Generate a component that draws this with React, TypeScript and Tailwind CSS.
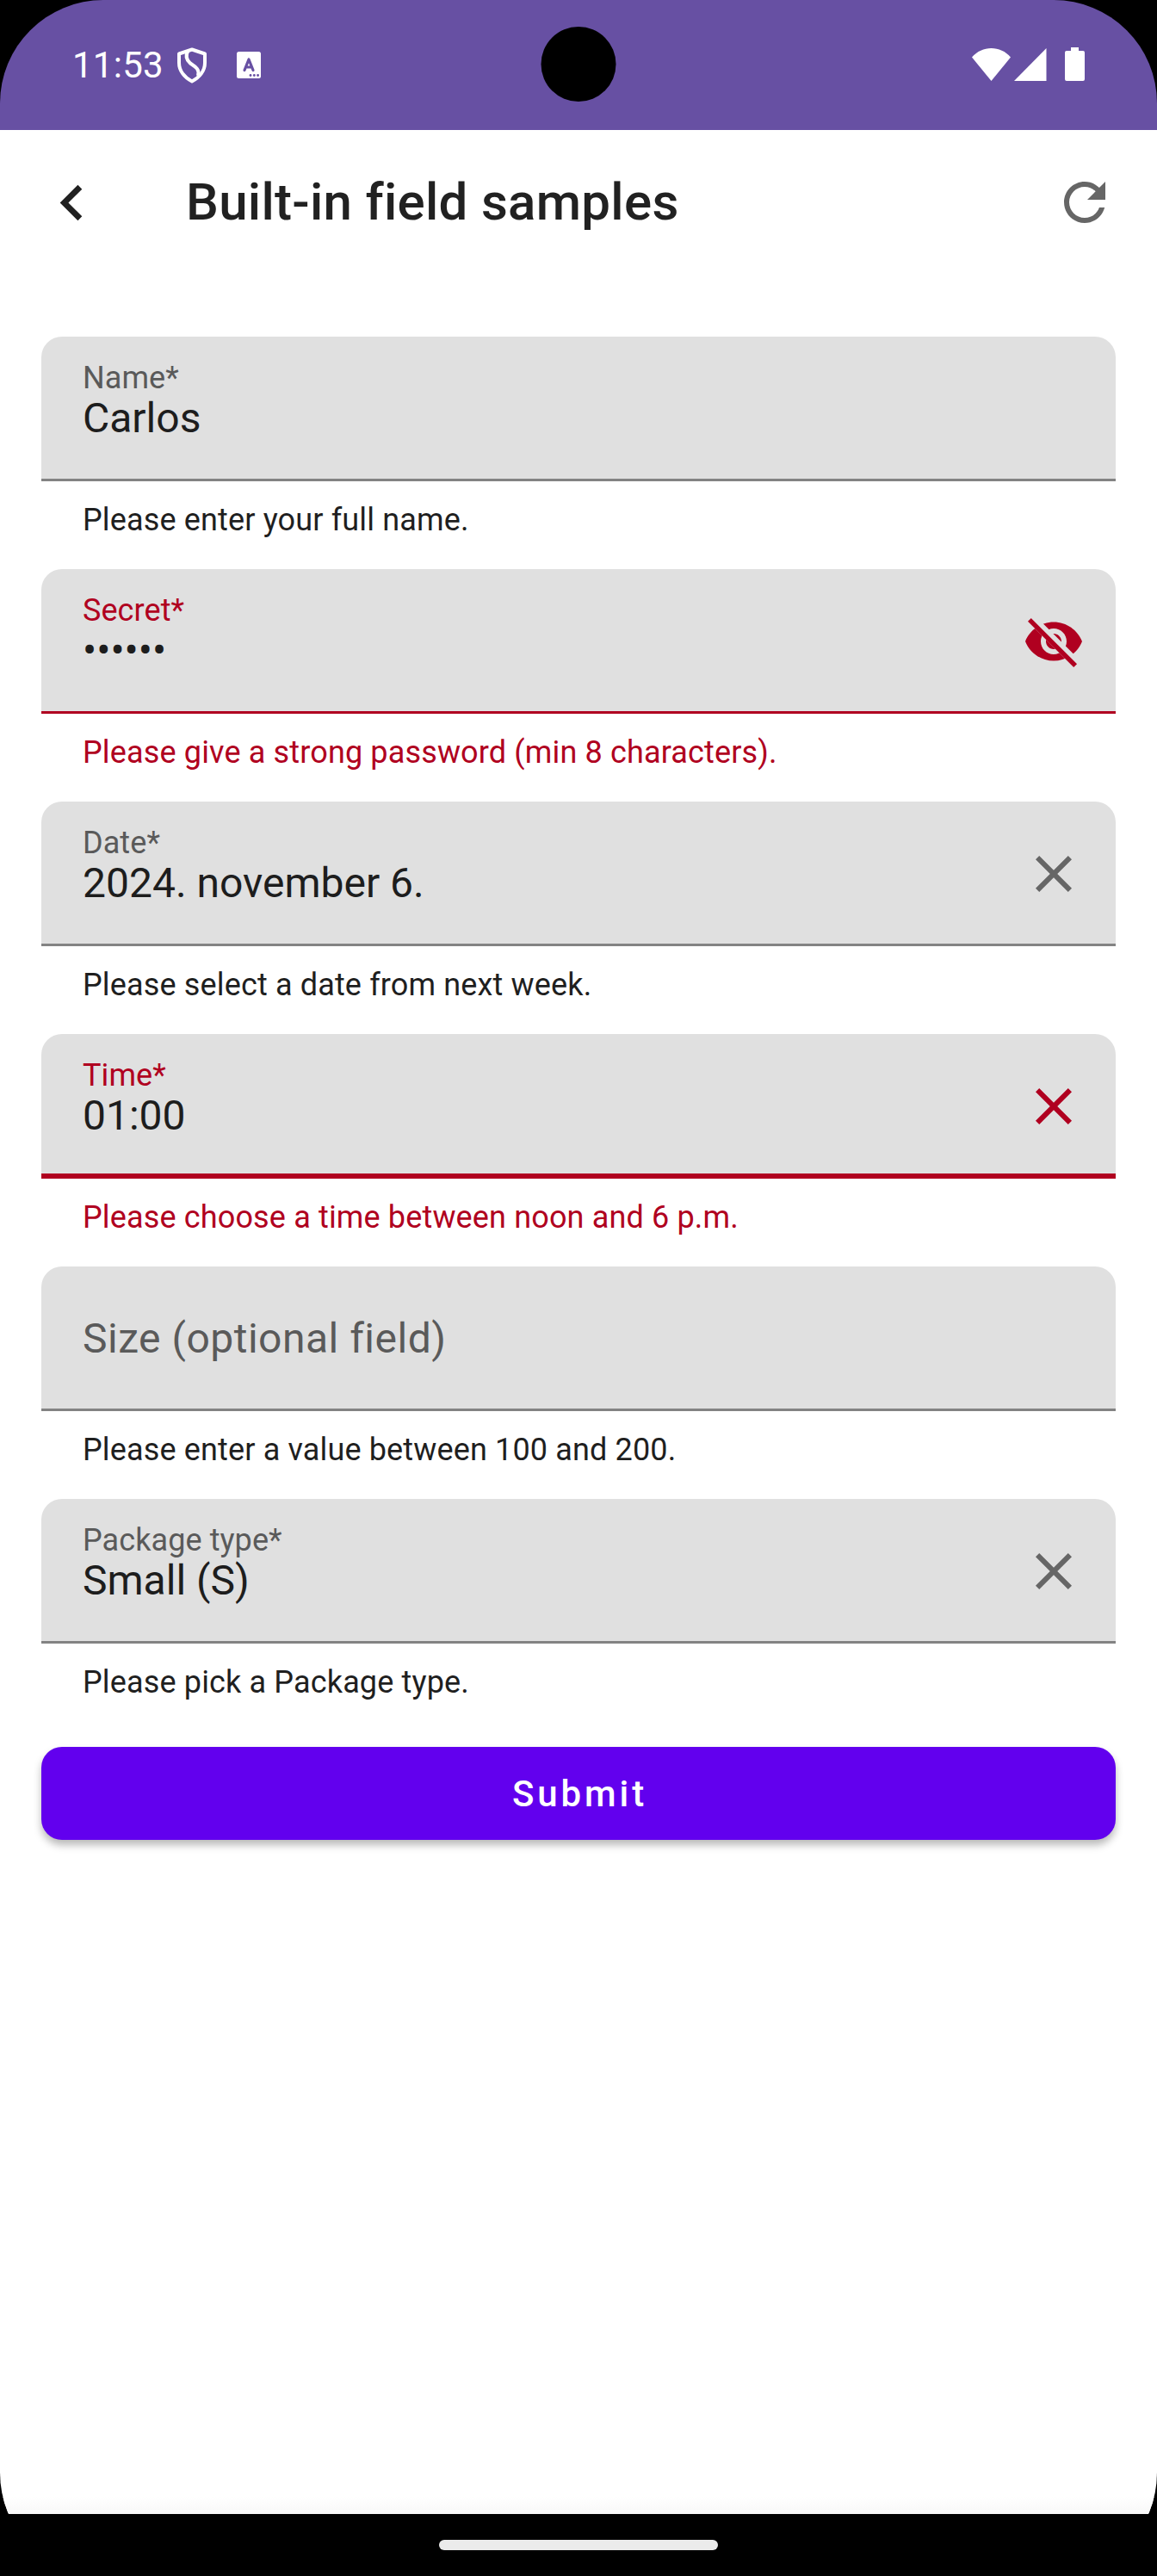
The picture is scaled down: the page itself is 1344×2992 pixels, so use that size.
import React from "react";

type Trailing = "clear" | "hidden";

interface FieldProps {
  label: string;
  value?: string;
  helper: string;
  error?: boolean;
  focused?: boolean;
  trailing?: Trailing;
}

function CloseIcon() {
  return (
    <svg viewBox="0 0 24 24" className="size-[72px]" fill="currentColor">
      <path d="M19 6.41 17.59 5 12 10.59 6.41 5 5 6.41 10.59 12 5 17.59 6.41 19 12 13.41 17.59 19 19 17.59 13.41 12z" />
    </svg>
  );
}

function HiddenIcon() {
  return (
    <svg viewBox="0 0 24 24" className="size-[72px]" fill="none">
      <clipPath id="eye-cut">
        <path d="M2 4.27 19.73 22 22.27 19.46 4.54 1.73V1H23V23H1V4.27Z" />
      </clipPath>
      <path
        clipPath="url(#eye-cut)"
        fill="currentColor"
        fillRule="evenodd"
        d="M12 4.5C7 4.5 2.73 7.61 1 12c1.73 4.39 6 7.5 11 7.5s9.27-3.11 11-7.5C21.27 7.61 17 4.5 12 4.5ZM12 17c-2.76 0-5-2.24-5-5s2.24-5 5-5 5 2.24 5 5-2.24 5-5 5Zm0-8c-1.66 0-3 1.34-3 3s1.34 3 3 3 3-1.34 3-3-1.34-3-3-3Z"
      />
      <path d="M3.27 4.27 19.74 20.74" stroke="currentColor" strokeWidth="1.8" strokeLinecap="square" />
    </svg>
  );
}

function Field({ label, value, helper, error, focused, trailing }: FieldProps) {
  const line = error ? "bg-[#b00020]" : "bg-[#838383]";
  return (
    <div className="flex h-[270px] flex-col">
      <div className="flex h-[168px] shrink-0 flex-col overflow-hidden rounded-t-[24px] bg-[#e0e0e0]">
        <div className="flex min-h-0 flex-1 justify-between pl-12 pr-9">
          {value ? (
            <div className="flex flex-col pt-[27px]">
              <span
                className={`text-[36px] leading-[42px] tracking-[0.08px] ${error ? "text-[#b00020]" : "text-[#5a5a5a]"}`}
              >
                {label}
              </span>
              <span className="text-[48px] leading-[52px] text-[#1d1d1d]">{value}</span>
            </div>
          ) : (
            <span className="text-[48px] leading-[168px] tracking-[0.5px] text-[#5a5a5a]">{label}</span>
          )}
          {trailing && (
            <div className={`flex h-[168px] items-center ${error ? "text-[#b00020]" : "text-[#666]"}`}>
              {trailing === "clear" ? <CloseIcon /> : <HiddenIcon />}
            </div>
          )}
        </div>
        <div className={`shrink-0 ${focused ? "h-1.5" : "h-[3px]"} ${line}`} />
      </div>
      <p
        className={`pl-12 pt-6 text-[36px] leading-[42px] tracking-[0.15px] ${error ? "text-[#b00020]" : "text-[#1f1f1f]"}`}
      >
        {helper}
      </p>
    </div>
  );
}

function StatusBar() {
  return (
    <header className="relative flex h-[151px] items-center justify-between bg-[#6750a3] px-[84px] text-white">
      <div className="flex items-center">
        <span className="w-[122px] text-[42px] leading-[48px] tracking-[0.25px]">11:53</span>
        <svg viewBox="0 0 34 42" className="h-[42px] w-[34px]" fill="none" stroke="currentColor" strokeWidth="4">
          <path d="M17 2.5 32 7.5V18C32 27 26 35 17 39.5 8 35 2 27 2 18V7.5Z" strokeLinejoin="round" />
          <path d="M12.500 4C9 10 11 15 15 18.500C20 22 26.500 25 24 33" />
        </svg>
        <svg viewBox="0 0 28 31" className="ml-[35px] h-[31px] w-7">
          <rect width="28" height="31" rx="2.5" fill="currentColor" />
          <path
            d="M9 21.5 14 9 19 21.5M10.8 18H17.2"
            fill="none"
            stroke="#6750a3"
            strokeWidth="3.2"
            strokeLinecap="round"
            strokeLinejoin="round"
          />
          <g fill="#6750a3">
            <circle cx="16" cy="27.5" r="1.4" />
            <circle cx="20.3" cy="27.5" r="1.4" />
            <circle cx="24.6" cy="27.5" r="1.4" />
          </g>
        </svg>
      </div>
      <div className="absolute left-1/2 top-[31px] size-[87px] -translate-x-1/2 rounded-full bg-black" />
      <div className="flex items-center pb-0.5">
        <svg viewBox="0 0 45 38" className="h-[38px] w-[45px]" fill="currentColor">
          <path d="M0 10.5C6 3.5 14 0 22.5 0S39 3.5 45 10.5L22.5 38Z" />
        </svg>
        <svg viewBox="0 0 38 38" className="ml-1 size-[38px]" fill="currentColor">
          <path d="M37.5 0V38H0Z" />
        </svg>
        <svg viewBox="0 0 23 39" className="ml-[21px] h-[39px] w-[23px]" fill="currentColor">
          <path d="M7 0H16V4H21Q23 4 23 6V37Q23 39 21 39H2Q0 39 0 37V6Q0 4 2 4H7Z" />
        </svg>
      </div>
    </header>
  );
}

const fields: FieldProps[] = [
  { label: "Name*", value: "Carlos", helper: "Please enter your full name." },
  {
    label: "Secret*",
    value: "••••••",
    helper: "Please give a strong password (min 8 characters).",
    error: true,
    trailing: "hidden",
  },
  { label: "Date*", value: "2024. november 6.", helper: "Please select a date from next week.", trailing: "clear" },
  {
    label: "Time*",
    value: "01:00",
    helper: "Please choose a time between noon and 6 p.m.",
    error: true,
    focused: true,
    trailing: "clear",
  },
  { label: "Size (optional field)", helper: "Please enter a value between 100 and 200." },
  { label: "Package type*", value: "Small (S)", helper: "Please pick a Package type.", trailing: "clear" },
];

export default function App() {
  return (
    <div className="h-[2992px] w-[1344px] bg-black font-[Roboto,sans-serif]">
      <div className="flex h-full flex-col overflow-hidden rounded-[120px]">
        <StatusBar />
        <main className="flex flex-1 flex-col bg-white">
          <div className="flex h-[168px] items-center pl-[42px] pr-12">
            <svg viewBox="0 0 24 24" className="size-[83px]" fill="#212121">
              <path d="M15.41 7.41 14 6l-6 6 6 6 1.41-1.41L10.83 12z" />
            </svg>
            <h1 className="ml-[91px] flex-1 text-[60px] font-medium leading-[70px] tracking-[0.3px] text-[#212121]">
              Built-in field samples
            </h1>
            <svg viewBox="0 0 24 24" className="size-[72px]" fill="#666">
              <path d="M17.65 6.35C16.2 4.9 14.21 4 12 4c-4.42 0-7.99 3.58-7.99 8s3.57 8 7.99 8c3.73 0 6.84-2.55 7.73-6h-2.08c-.82 2.33-3.04 4-5.65 4-3.31 0-6-2.69-6-6s2.69-6 6-6c1.66 0 3.14.69 4.22 1.78L13 11h7V4l-2.35 2.35z" />
            </svg>
          </div>
          <form className="flex flex-col px-12 pt-[72px]" onSubmit={(e) => e.preventDefault()}>
            {fields.map((f) => (
              <Field key={f.label} {...f} />
            ))}
            <button className="mt-[18px] h-[108px] rounded-[24px] bg-[#6200ee] pl-[3px] pt-0.5 text-[42px] font-medium leading-[50px] tracking-[3.9px] text-white shadow-[0_6px_10px_rgba(0,0,0,0.28)]">
              Submit
            </button>
          </form>
          <div className="mt-auto h-5 bg-linear-to-b from-white to-[#f8f8f8]" />
        </main>
        <footer className="flex h-[72px] items-center justify-center bg-black">
          <div className="h-3 w-[324px] rounded-full bg-[#ebebeb]" />
        </footer>
      </div>
    </div>
  );
}
